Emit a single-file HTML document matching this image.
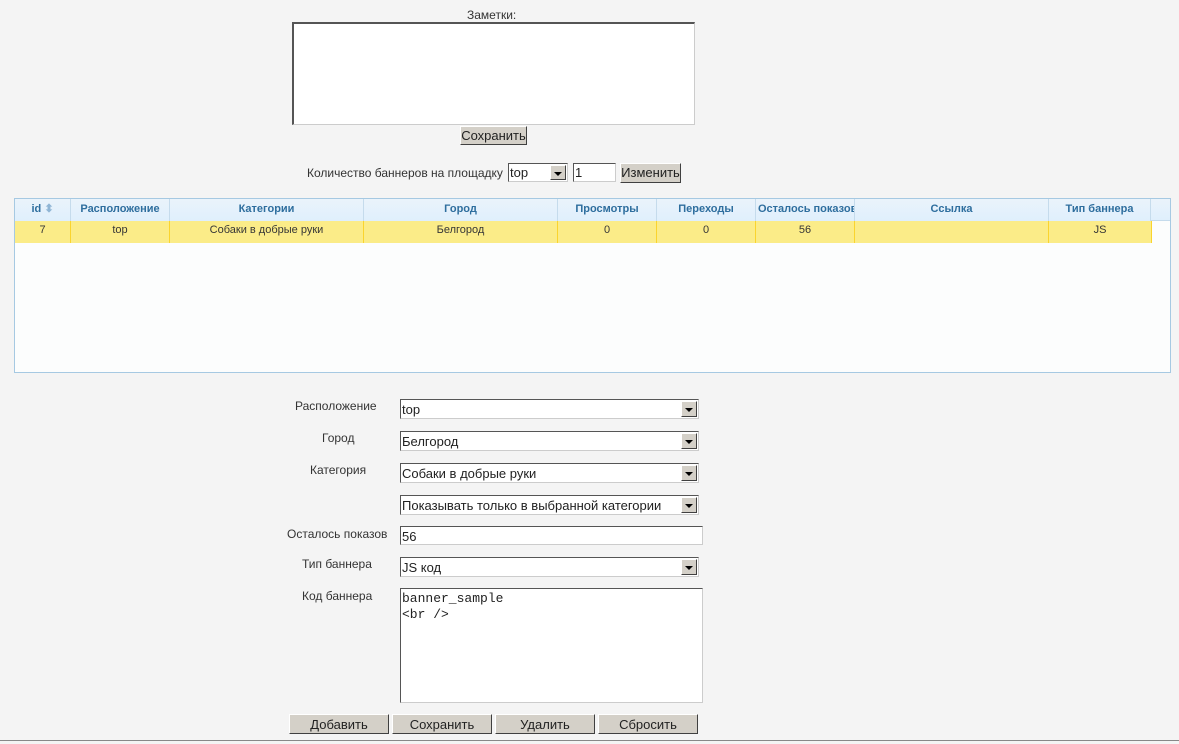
<!DOCTYPE html><html><head><meta charset="utf-8"><style>
body{margin:0;width:1179px;height:743px;background:#f4f4f4;font-family:"Liberation Sans",sans-serif;font-size:12px;color:#222;position:relative;overflow:hidden}
.a{position:absolute}
.inp{position:absolute;background:#fff;border:1px solid;border-color:#555 #ccc #ccc #555;box-sizing:border-box;font-size:13px;line-height:15px;padding-left:1px;padding-top:1px}
.sel .arr{position:absolute;right:1px;top:1px;width:16px;bottom:1px;background:#d4d0c8;border:1px solid;border-color:#fff #404040 #404040 #fff;box-sizing:border-box}
.sel .arr:after{content:"";position:absolute;left:3px;top:6px;border-left:4px solid transparent;border-right:4px solid transparent;border-top:4px solid #000}
.btn{position:absolute;background:#d4d0c8;border:1px solid;border-color:#fff #404040 #404040 #fff;box-sizing:border-box;font-size:13px;text-align:center;line-height:19px}
.lbl{position:absolute;font-size:12px;color:#333}
.th,.td{position:absolute;text-align:center;box-sizing:border-box;border-right:1px solid #c5dbec;font-size:11px;white-space:nowrap;overflow:hidden}
.th{top:199px;height:22px;line-height:20px;font-weight:bold;color:#2e6e9e;background:linear-gradient(#eaf3fb,#dfeffc)}
.td{top:221px;height:22px;line-height:18px;background:#fbec88;border-right:1px solid #fad42e;color:#363636}
</style></head><body>
<div class="lbl" style="left:467px;top:8px">Заметки:</div>
<div class="inp" style="left:292px;top:22px;width:403px;height:103px;border-width:2px 1px 1px 2px"></div>
<div class="btn" style="left:460px;top:126px;width:67px;height:19px;line-height:17px">Сохранить</div>
<div class="lbl" style="left:307px;top:166px">Количество баннеров на площадку</div>
<div class="inp sel" style="left:508px;top:163px;width:60px;height:19px;padding-top:1px">top<div class="arr"></div></div>
<div class="inp" style="left:573px;top:163px;width:43px;height:19px">1</div>
<div class="btn" style="left:620px;top:163px;width:61px;height:20px;line-height:18px">Изменить</div>

<div class="a" style="left:14px;top:198px;width:1157px;height:175px;border:1px solid #a6c9e2;box-sizing:border-box;background:#fcfdfd"></div>
<div class="a" style="left:15px;top:199px;width:1155px;height:22px;background:linear-gradient(#eaf3fb,#dfeffc);border-bottom:1px solid #c5dbec;box-sizing:border-box"></div>
<div class="th" style="left:15px;width:56px">id <span style="color:#8fb5d5">⬍</span></div>
<div class="th" style="left:71px;width:99px">Расположение</div>
<div class="th" style="left:170px;width:194px">Категории</div>
<div class="th" style="left:364px;width:194px">Город</div>
<div class="th" style="left:558px;width:99px">Просмотры</div>
<div class="th" style="left:657px;width:99px">Переходы</div>
<div class="th" style="left:756px;width:99px;text-align:left;padding-left:2px">Осталось показов</div>
<div class="th" style="left:855px;width:194px">Ссылка</div>
<div class="th" style="left:1049px;width:102px">Тип баннера</div>
<div class="a" style="left:15px;top:221px;width:1137px;height:22px;background:#fbec88;border-bottom:1px solid #fad42e;box-sizing:border-box"></div>
<div class="td" style="left:15px;width:56px">7</div>
<div class="td" style="left:71px;width:99px">top</div>
<div class="td" style="left:170px;width:194px">Собаки в добрые руки</div>
<div class="td" style="left:364px;width:194px">Белгород</div>
<div class="td" style="left:558px;width:99px">0</div>
<div class="td" style="left:657px;width:99px">0</div>
<div class="td" style="left:756px;width:99px">56</div>
<div class="td" style="left:855px;width:194px"></div>
<div class="td" style="left:1049px;width:103px">JS</div>

<div class="lbl" style="left:295px;top:399px">Расположение</div>
<div class="inp sel" style="left:400px;top:399px;width:299px;height:20px;padding-top:2px">top<div class="arr"></div></div>
<div class="lbl" style="left:322px;top:431px">Город</div>
<div class="inp sel" style="left:400px;top:431px;width:299px;height:20px;padding-top:2px">Белгород<div class="arr"></div></div>
<div class="lbl" style="left:310px;top:463px">Категория</div>
<div class="inp sel" style="left:400px;top:463px;width:299px;height:20px;padding-top:2px">Собаки в добрые руки<div class="arr"></div></div>
<div class="inp sel" style="left:400px;top:495px;width:299px;height:20px;padding-top:2px">Показывать только в выбранной категории<div class="arr"></div></div>
<div class="lbl" style="left:287px;top:527px">Осталось показов</div>
<div class="inp" style="left:400px;top:526px;width:303px;height:19px;padding-top:2px">56</div>
<div class="lbl" style="left:302px;top:557px">Тип баннера</div>
<div class="inp sel" style="left:400px;top:557px;width:299px;height:20px;padding-top:2px">JS код<div class="arr"></div></div>
<div class="lbl" style="left:302px;top:589px">Код баннера</div>
<div class="inp" style="left:400px;top:588px;width:303px;height:115px;font-family:'Liberation Mono',monospace;font-size:13px;line-height:16px;padding-top:2px">banner_sample<br>&lt;br /&gt;</div>
<div class="btn" style="left:289px;top:714px;width:100px;height:20px">Добавить</div>
<div class="btn" style="left:392px;top:714px;width:100px;height:20px">Сохранить</div>
<div class="btn" style="left:495px;top:714px;width:100px;height:20px">Удалить</div>
<div class="btn" style="left:598px;top:714px;width:100px;height:20px">Сбросить</div>
<div class="a" style="left:0;top:740px;width:1179px;height:3px;border-top:1px solid #888;background:#f4f4f4"></div>
</body></html>
